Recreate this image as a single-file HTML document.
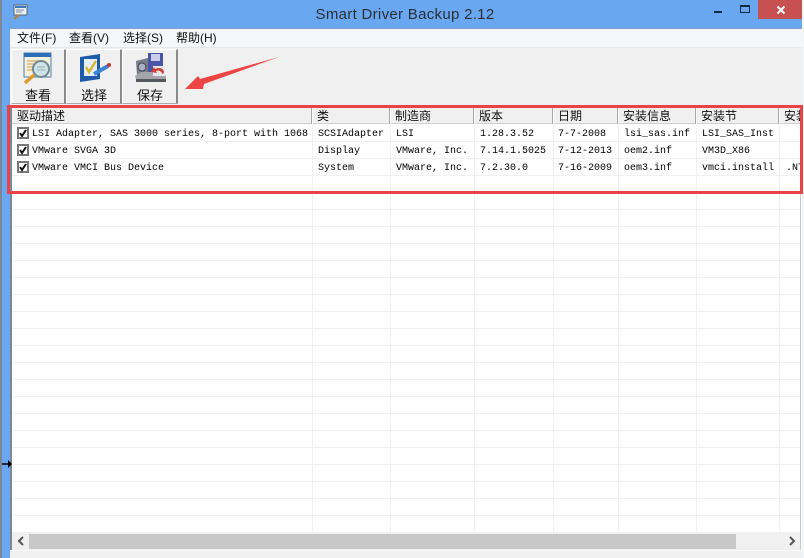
<!DOCTYPE html>
<html><head><meta charset="utf-8">
<style>
html,body{margin:0;padding:0;width:804px;height:558px;overflow:hidden;background:#6aa7f1}
div{position:absolute;box-sizing:border-box}
.t{white-space:nowrap;line-height:14px}
.cjk{font:12px/14px "Liberation Sans","WenQuanYi Zen Hei","Noto Sans CJK SC",sans-serif;color:#111;white-space:nowrap}
.m{font:10px/14px "Liberation Mono","Liberation Serif",monospace;color:#000;white-space:pre}
.hs{top:108px;width:2px;height:16px;background:#a8a8a8;border-right:1px solid #fff}
.vl{top:124px;width:1px;height:409px;background:#f0f2f0}
.hl{left:12px;width:788px;height:1px;background:#f0f2f0}
.cb{left:17px;width:12px;height:12px;border:2px solid #777;background:#fff}
.btn{top:49px;height:55px;background:#f0f0f0;border-right:2px solid #8a8a8a;border-bottom:1px solid #aaa;border-left:1px solid #fff;border-top:1px solid #fff}
</style></head>
<body>
<div style="left:0;top:0;width:2px;height:558px;background:#7d8894"></div>
<div style="left:802px;top:0;width:2px;height:558px;background:#f4f5f6"></div>
<!-- title -->
<svg style="position:absolute;left:12px;top:4px" width="16" height="16" viewBox="0 0 16 16"><rect x="2" y="1" width="13" height="10" fill="#e8eef2" stroke="#59656e"/><rect x="3" y="2" width="11" height="2" fill="#3a78c0"/><path d="M4 6h8M4 8h6" stroke="#88a" /><path d="M2 15l5-4" stroke="#b98330" stroke-width="2"/></svg>
<div class="t" style="left:250px;top:5px;width:310px;text-align:center;font:15px/18px 'Liberation Sans',sans-serif;color:#2a2f36;letter-spacing:.3px;padding-top:1px">Smart Driver Backup 2.12</div>
<div style="left:714px;top:11px;width:8px;height:2px;background:#0f2a44"></div>
<div style="left:740px;top:5px;width:10px;height:8px;border:1px solid #0f2a44;border-top-width:2px"></div>
<div style="left:758px;top:0;width:44px;height:19px;background:#c75050"></div>
<svg style="position:absolute;left:776px;top:5px" width="10" height="10" viewBox="0 0 10 10"><path d="M1.500 1.500l7 7M8.500 1.500l-7 7" stroke="#fff" stroke-width="2"/></svg>
<!-- menu -->
<div style="left:10px;top:28px;width:792px;height:1px;background:#7f9fc6"></div>
<div style="left:10px;top:29px;width:792px;height:18px;background:#f5f6f7"></div>
<div class="cjk" style="left:17px;top:31px">文件(F)</div>
<div class="cjk" style="left:69px;top:31px">查看(V)</div>
<div class="cjk" style="left:123px;top:31px">选择(S)</div>
<div class="cjk" style="left:176px;top:31px">帮助(H)</div>
<!-- toolbar -->
<div style="left:10px;top:47px;width:792px;height:58px;background:#f0f0f0;border-top:1px solid #e6e6e6"></div>
<div class="btn" style="left:11px;width:55px"></div>
<div class="btn" style="left:66px;width:56px"></div>
<div class="btn" style="left:122px;width:56px"></div>
<div class="cjk" style="left:25px;top:89px;font-size:13px">查看</div>
<div class="cjk" style="left:81px;top:89px;font-size:13px">选择</div>
<div class="cjk" style="left:137px;top:89px;font-size:13px">保存</div>
<svg style="position:absolute;left:22px;top:52px" width="32" height="34" viewBox="0 0 32 34">
<rect x="2" y="1" width="27" height="24" fill="#f3f0dc" stroke="#4d7fb0"/><rect x="2" y="1" width="27" height="4" fill="#2e6fb5"/>
<path d="M5 9h12M5 12h9M5 15h8M5 18h7" stroke="#d79a4a"/>
<circle cx="19" cy="17" r="8" fill="#cfe4e6" stroke="#6f8b95" stroke-width="2"/><path d="M15 15h8M15 18h8" stroke="#8fb2b8"/>
<path d="M12 23L3 31" stroke="#e09a2a" stroke-width="3.500"/></svg>
<svg style="position:absolute;left:78px;top:52px" width="34" height="32" viewBox="0 0 34 32">
<path d="M2 5l20-3v25l-20 3z" fill="#1f5aa8"/><rect x="6" y="7" width="13" height="17" fill="#e6ecf6"/>
<path d="M8 15l3 5 7-11" fill="none" stroke="#d5b832" stroke-width="2.500"/>
<path d="M16 22l14-8" stroke="#3d85d0" stroke-width="4"/><circle cx="31" cy="13" r="2" fill="#c7332e"/></svg>
<svg style="position:absolute;left:134px;top:52px" width="34" height="34" viewBox="0 0 34 34">
<rect x="14" y="1" width="15" height="24" fill="#4a55a8"/><rect x="17" y="2" width="9" height="7" fill="#c9cfe9"/>
<path d="M2 9l12-3v17H3z" fill="#777c88"/><circle cx="8" cy="15" r="4" fill="#aab1c2" stroke="#3e4350"/>
<path d="M1 24l6-4h20l5 4v3H2z" fill="#a5a6ac"/><path d="M2 27h30v3H2z" fill="#55575e"/>
<rect x="19" y="14" width="12" height="10" fill="#e6e7ef"/>
<path d="M30 21c0-5-5-6-9-4l-1-2-3 5 6 1-1-2c3-1 6 0 6 3z" fill="#d2402f"/></svg>
<!-- arrow -->
<svg style="position:absolute;left:0;top:0" width="804" height="110"><polygon points="185,89 198,76 200,79 279,57 204,84 203,89" fill="#ef4444"/></svg>
<!-- list -->
<div style="left:10px;top:105px;width:792px;height:445px;background:#fff"></div>
<div style="left:10px;top:105px;width:2px;height:445px;background:#7d8894"></div>
<div style="left:800px;top:124px;width:1px;height:426px;background:#c9c9c9"></div>
<div style="left:12px;top:108px;width:788px;height:16px;background:#f0f0f0;border-bottom:1px solid #d0d0d0"></div>
<div class="hs" style="left:311px"></div><div class="hs" style="left:389px"></div><div class="hs" style="left:473px"></div><div class="hs" style="left:552px"></div><div class="hs" style="left:617px"></div><div class="hs" style="left:695px"></div><div class="hs" style="left:778px"></div>
<div class="vl" style="left:312px"></div><div class="vl" style="left:390px"></div><div class="vl" style="left:474px"></div><div class="vl" style="left:553px"></div><div class="vl" style="left:618px"></div><div class="vl" style="left:696px"></div><div class="vl" style="left:779px"></div>
<div class="hl" style="top:141px"></div><div class="hl" style="top:158px"></div><div class="hl" style="top:175px"></div><div class="hl" style="top:192px"></div><div class="hl" style="top:209px"></div><div class="hl" style="top:226px"></div><div class="hl" style="top:243px"></div><div class="hl" style="top:260px"></div><div class="hl" style="top:277px"></div><div class="hl" style="top:294px"></div><div class="hl" style="top:311px"></div><div class="hl" style="top:328px"></div><div class="hl" style="top:345px"></div><div class="hl" style="top:362px"></div><div class="hl" style="top:379px"></div><div class="hl" style="top:396px"></div><div class="hl" style="top:413px"></div><div class="hl" style="top:430px"></div><div class="hl" style="top:447px"></div><div class="hl" style="top:464px"></div><div class="hl" style="top:481px"></div><div class="hl" style="top:498px"></div><div class="hl" style="top:515px"></div><div class="hl" style="top:532px"></div>
<div class="cjk" style="left:17px;top:109px">驱动描述</div>
<div class="cjk" style="left:317px;top:109px">类</div>
<div class="cjk" style="left:395px;top:109px">制造商</div>
<div class="cjk" style="left:479px;top:109px">版本</div>
<div class="cjk" style="left:558px;top:109px">日期</div>
<div class="cjk" style="left:623px;top:109px">安装信息</div>
<div class="cjk" style="left:701px;top:109px">安装节</div>
<div class="cjk" style="left:784px;top:109px;width:16px;overflow:hidden">安装</div>
<div class="cb" style="top:127px"></div><div class="cb" style="top:144px"></div><div class="cb" style="top:161px"></div>
<svg style="position:absolute;left:17px;top:127px" width="12" height="46" viewBox="0 0 12 46"><path d="M3 6l2 3 4-6M3 23l2 3 4-6M3 40l2 3 4-6" fill="none" stroke="#111" stroke-width="2"/></svg>
<div class="m" style="left:32px;top:126px;padding-top:2px">LSI Adapter, SAS 3000 series, 8-port with 1068</div>
<div class="m" style="left:318px;top:128px">SCSIAdapter</div>
<div class="m" style="left:396px;top:128px">LSI</div>
<div class="m" style="left:480px;top:128px">1.28.3.52</div>
<div class="m" style="left:558px;top:128px">7-7-2008</div>
<div class="m" style="left:624px;top:128px">lsi_sas.inf</div>
<div class="m" style="left:702px;top:128px">LSI_SAS_Inst</div>
<div class="m" style="left:32px;top:145px">VMware SVGA 3D</div>
<div class="m" style="left:318px;top:145px">Display</div>
<div class="m" style="left:396px;top:145px">VMware, Inc.</div>
<div class="m" style="left:480px;top:145px">7.14.1.5025</div>
<div class="m" style="left:558px;top:145px">7-12-2013</div>
<div class="m" style="left:624px;top:145px">oem2.inf</div>
<div class="m" style="left:702px;top:145px">VM3D_X86</div>
<div class="m" style="left:32px;top:162px">VMware VMCI Bus Device</div>
<div class="m" style="left:318px;top:162px">System</div>
<div class="m" style="left:396px;top:162px">VMware, Inc.</div>
<div class="m" style="left:480px;top:162px">7.2.30.0</div>
<div class="m" style="left:558px;top:162px">7-16-2009</div>
<div class="m" style="left:624px;top:162px">oem3.inf</div>
<div class="m" style="left:702px;top:162px">vmci.install</div>
<div class="m" style="left:786px;top:162px;width:14px;overflow:hidden">.NT</div>
<!-- red rectangle -->
<div style="left:7px;top:105px;width:796px;height:89px;border:3px solid #ea4347"></div>
<!-- scrollbar -->
<div style="left:12px;top:533px;width:788px;height:17px;background:#f0f0f0"></div>
<div style="left:29px;top:534px;width:707px;height:15px;background:#c8c8c8"></div>
<svg style="position:absolute;left:16px;top:536px" width="10" height="10" viewBox="0 0 10 10"><path d="M7 1L3 5l4 4" fill="none" stroke="#555" stroke-width="2"/></svg>
<svg style="position:absolute;left:787px;top:536px" width="10" height="10" viewBox="0 0 10 10"><path d="M3 1l4 4-4 4" fill="none" stroke="#555" stroke-width="2"/></svg>
<!-- status -->
<div style="left:10px;top:550px;width:792px;height:8px;background:#f0f0f0;border-top:1px solid #fafafa"></div>
<!-- cursor -->
<svg style="position:absolute;left:1px;top:459px" width="12" height="10" viewBox="0 0 12 10"><path d="M1 5h7" stroke="#000" stroke-width="1.500"/><path d="M7 1l4 4-4 4z" fill="#000"/></svg>
</body></html>
